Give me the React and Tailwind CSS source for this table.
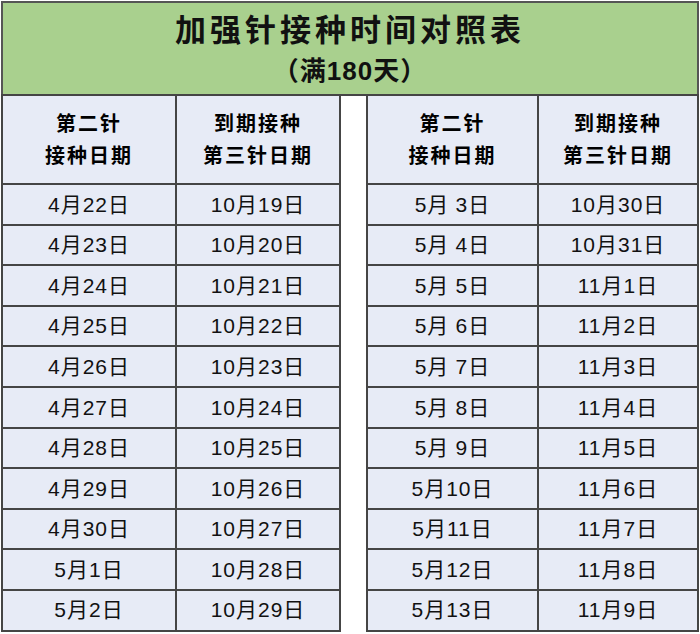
import React from 'react';

const LEFT = [
    ['4月22日', '10月19日'],
    ['4月23日', '10月20日'],
    ['4月24日', '10月21日'],
    ['4月25日', '10月22日'],
    ['4月26日', '10月23日'],
    ['4月27日', '10月24日'],
    ['4月28日', '10月25日'],
    ['4月29日', '10月26日'],
    ['4月30日', '10月27日'],
    ['5月1日', '10月28日'],
    ['5月2日', '10月29日'],
];

const RIGHT = [
    ['5月\u20053日', '10月30日'],
    ['5月\u20054日', '10月31日'],
    ['5月\u20055日', '11月1日'],
    ['5月\u20056日', '11月2日'],
    ['5月\u20057日', '11月3日'],
    ['5月\u20058日', '11月4日'],
    ['5月\u20059日', '11月5日'],
    ['5月10日', '11月6日'],
    ['5月11日', '11月7日'],
    ['5月12日', '11月8日'],
    ['5月13日', '11月9日'],
];

const font = { fontFamily: '"Liberation Sans", "Noto Sans CJK SC", sans-serif' };

/** 半张对照表：表头 + 11 行 */
const HalfTable = ({ rows, w1, w2 }) => (
    <div className="flex flex-col border-l-2 border-[#454545]">
        <div className="flex h-[89px]">
            <div className={`${w1} flex flex-col items-center justify-center border-r-2 border-b-2 border-[#454545] bg-[#e7ebf6] text-[20px] font-bold leading-[32px] tracking-[2px] text-black`}>
                <span>第二针</span>
                <span>接种日期</span>
            </div>
            <div className={`${w2} flex flex-col items-center justify-center border-r-2 border-b-2 border-[#454545] bg-[#e7ebf6] text-[20px] font-bold leading-[32px] tracking-[2px] text-black`}>
                <span>到期接种</span>
                <span>第三针日期</span>
            </div>
        </div>
        {rows.map(([a, b]) => (
            <div key={a} className="flex h-[40.6px]">
                <div className={`${w1} flex items-center justify-center border-r-2 border-b-2 border-[#454545] bg-[#e7ebf6] text-[21px] tracking-[1px] text-[#111]`}>{a}</div>
                <div className={`${w2} flex items-center justify-center border-r-2 border-b-2 border-[#454545] bg-[#e7ebf6] text-[21px] tracking-[1px] text-[#111]`}>{b}</div>
            </div>
        ))}
    </div>
);

export default function App() {
    return (
        <div className="w-[700px] h-[634px] overflow-hidden bg-white" style={font}>
            <div className="pt-[1px] pl-[1px] w-[699px]">
                <div className="h-[93px] flex flex-col items-center bg-[#a9d08e] border-2 border-b-0 border-[#555]">
                    <div className="mt-[9px] text-[31px] font-bold leading-[38px] tracking-[4px] text-[#111]">加强针接种时间对照表</div>
                    <div className="mt-[5px] text-[26px] font-bold leading-[32px] tracking-[1px] text-[#111]">（满180天）</div>
                </div>
                <div className="flex border-t-2 border-[#454545]">
                    <HalfTable rows={LEFT} w1="w-[174px]" w2="w-[164px]" />
                    <div className="w-[25px] bg-white" />
                    <HalfTable rows={RIGHT} w1="w-[171px]" w2="w-[160px]" />
                </div>
            </div>
        </div>
    );
}
